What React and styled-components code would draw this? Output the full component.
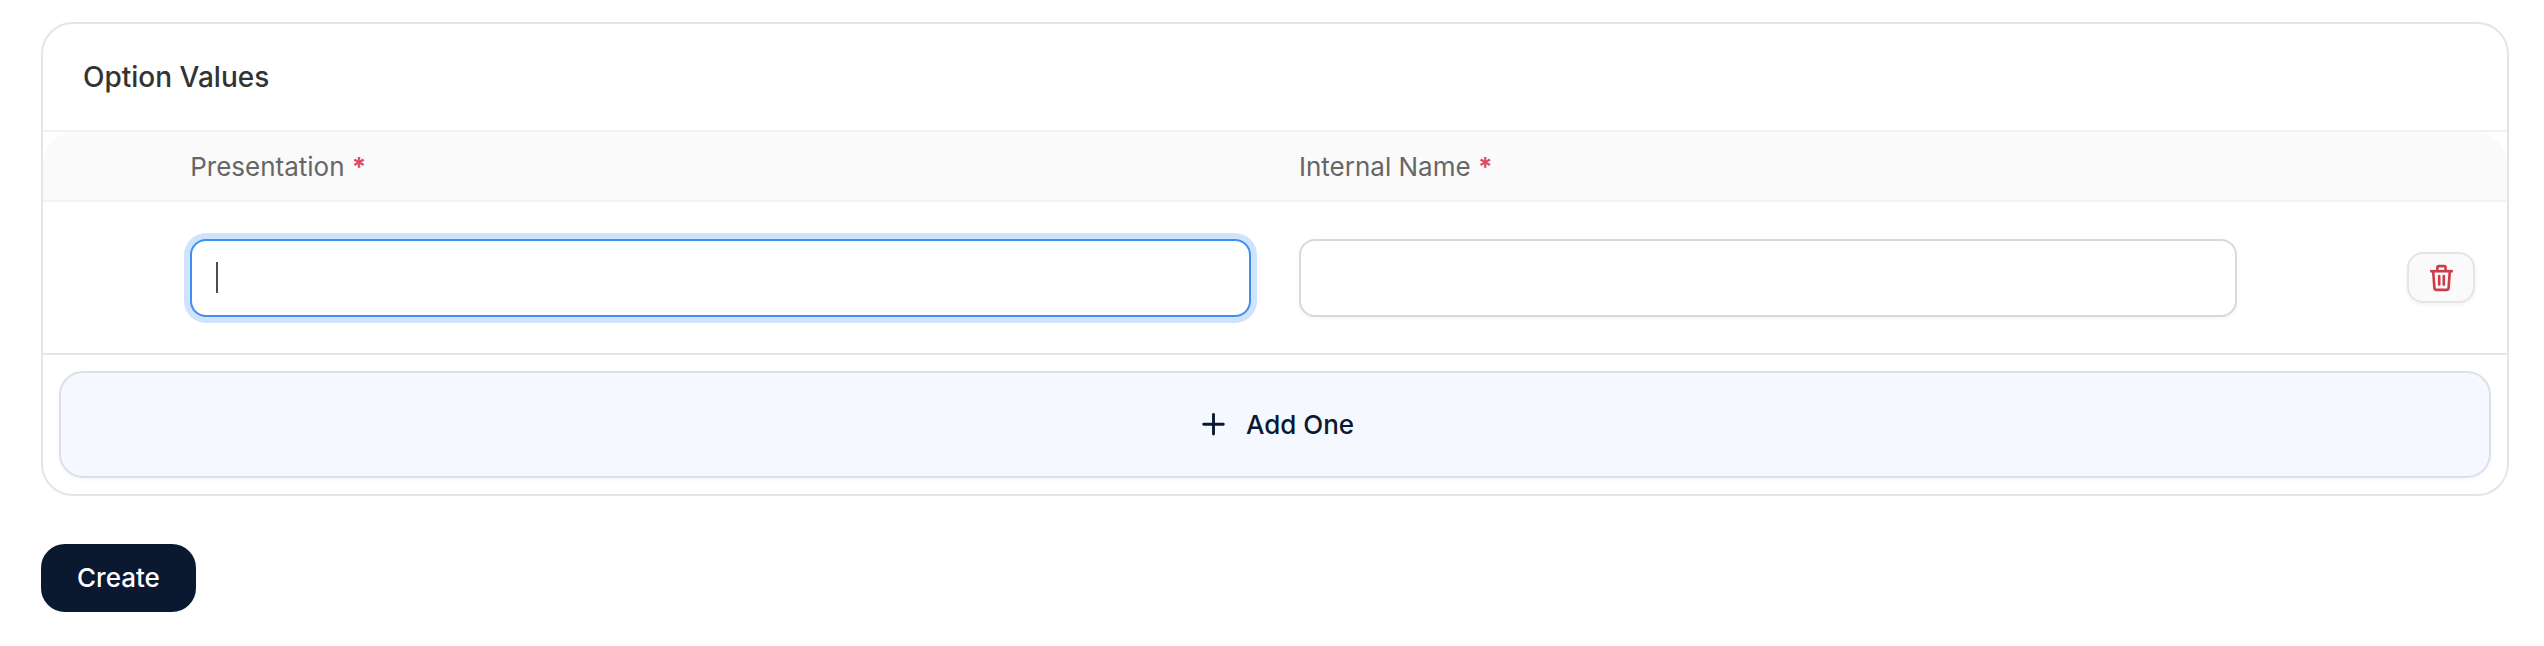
import React, { useState } from "react";
import styled, { createGlobalStyle } from "styled-components";

const GlobalStyle = createGlobalStyle`
  * {
    box-sizing: border-box;
  }

  body {
    margin: 0;
    background: #fff;
    color: #333;
    font-family: Inter, "Liberation Sans", sans-serif;
    font-size: 26px;
    line-height: 36px;
  }

  button,
  input {
    font: inherit;
  }
`;

const Form = styled.form`
  padding: 22px 35px 32px 41px;
`;

const Card = styled.section`
  margin-bottom: 48px;
  border: 2px solid #e5e5e5;
  border-radius: 32px;
`;

const CardHeader = styled.header`
  padding: 35px 40px;
  border-bottom: 2px solid #f2f2f2;
`;

const CardTitle = styled.h2`
  margin: 0;
  font-size: 28px;
  font-weight: 500;
`;

const Table = styled.table`
  width: 100%;
  table-layout: fixed;
  border-collapse: separate;
  border-spacing: 0;
`;

const HeadCell = styled.th`
  width: ${(props) => props.$width};
  padding: 17px 24px 15px;
  background: #fafafa;
  border-bottom: 2px solid #f2f2f2;
  color: #666;
  font-weight: 400;
  text-align: left;

  &:first-child {
    border-top-left-radius: 32px;
  }

  &:last-child {
    border-top-right-radius: 32px;
  }
`;

const Required = styled.span`
  color: #dd4a68;
  font-weight: 700;
`;

const Cell = styled.td`
  height: 153px;
  padding: 0 24px;
  border-bottom: 2px solid #e5e5e5;
`;

const ActionCell = styled(Cell)`
  padding-right: 32px;
  text-align: right;
`;

const Field = styled.div`
  position: relative;
  display: flex;
`;

const TextInput = styled.input`
  width: 100%;
  height: 78px;
  padding: 0 24px;
  background: #fff;
  border: 2px solid #d9d9d9;
  border-radius: 16px;
  box-shadow: 0 2px 4px rgba(0, 0, 0, 0.04);
  color: #333;
  caret-color: ${(props) => (props.value ? "#4d4d4d" : "transparent")};
  outline: none;

  &:focus {
    border-color: #3d8ff5;
    box-shadow: 0 0 0 6px #cfe3fd;
  }
`;

const Caret = styled.span`
  position: absolute;
  top: 23px;
  left: 26px;
  width: 2px;
  height: 31px;
  background: #4d4d4d;
  pointer-events: none;
`;

const Button = styled.button`
  display: inline-flex;
  align-items: center;
  justify-content: center;
  gap: 18px;
  border: 2px solid transparent;
  border-radius: 24px;
  font-weight: 500;
  cursor: pointer;
`;

const DeleteButton = styled(Button)`
  width: 68px;
  height: 51px;
  padding: 0;
  background: #fafafa;
  border-color: #e5e5e5;
  border-radius: 16px;
  box-shadow: 0 2px 4px rgba(0, 0, 0, 0.05);
  color: #cc3d47;
  vertical-align: middle;
`;

const CardFooter = styled.footer`
  padding: 16px;
`;

const AddButton = styled(Button)`
  width: 100%;
  height: 107px;
  background: #f5f8ff;
  border-color: #dbe0ea;
  box-shadow: 0 2px 4px rgba(0, 0, 0, 0.03);
  color: #0a1930;
`;

const SubmitButton = styled(Button)`
  height: 68px;
  padding: 0 34px;
  background: #0a1930;
  border-color: #0a1930;
  color: #fff;
`;

const Icon = styled.svg`
  width: 32px;
  height: 32px;
  fill: none;
  stroke: currentColor;
  stroke-width: ${(props) => props.$stroke};
  stroke-linecap: round;
  stroke-linejoin: round;
`;

function PlusIcon() {
  return (
    <Icon viewBox="0 0 32 32" $stroke={2.9} aria-hidden="true">
      <path d="M17.5 5.5v19.6M7.7 15.3h19.6" />
    </Icon>
  );
}

function TrashIcon() {
  return (
    <Icon viewBox="0 0 32 32" $stroke={2.6} aria-hidden="true">
      <path d="M6.4 9.2h20.2" strokeLinecap="square" />
      <path d="M12.4 9v-3.4a1.5 1.5 0 0 1 1.5 -1.5h5.2a1.5 1.5 0 0 1 1.5 1.5v3.4" />
      <path d="M8.2 9.4l1.2 16.4a2.3 2.3 0 0 0 2.3 2.1h9.6a2.3 2.3 0 0 0 2.3 -2.1l1.2 -16.4" />
      <path d="M14.2 14v8.6M18.8 14v8.6" />
    </Icon>
  );
}

function App() {
  const [values, setValues] = useState([{ id: 1, presentation: "", name: "" }]);
  const [focused, setFocused] = useState(1);

  const handleChange = (id, key, value) => {
    setValues(
      values.map((item) => (item.id === id ? { ...item, [key]: value } : item))
    );
  };

  const handleAdd = () => {
    setValues([...values, { id: Date.now(), presentation: "", name: "" }]);
  };

  const handleDelete = (id) => {
    setValues(values.filter((item) => item.id !== id));
  };

  return (
    <>
      <GlobalStyle />
      <Form onSubmit={(event) => event.preventDefault()}>
        <Card>
          <CardHeader>
            <CardTitle>Option Values</CardTitle>
          </CardHeader>
          <Table>
            <thead>
              <tr>
                <HeadCell $width="5%" />
                <HeadCell $width="45%" id="presentation">
                  Presentation <Required>*</Required>
                </HeadCell>
                <HeadCell $width="40%" id="internal-name">
                  Internal Name <Required>*</Required>
                </HeadCell>
                <HeadCell $width="10%" />
              </tr>
            </thead>
            <tbody>
              {values.map((item) => (
                <tr key={item.id}>
                  <Cell />
                  <Cell>
                    <Field>
                      <TextInput
                        type="text"
                        aria-labelledby="presentation"
                        autoFocus
                        value={item.presentation}
                        onFocus={() => setFocused(item.id)}
                        onBlur={() => setFocused(null)}
                        onChange={(event) =>
                          handleChange(item.id, "presentation", event.target.value)
                        }
                      />
                      {focused === item.id && !item.presentation && <Caret />}
                    </Field>
                  </Cell>
                  <Cell>
                    <Field>
                      <TextInput
                        type="text"
                        aria-labelledby="internal-name"
                        value={item.name}
                        onChange={(event) =>
                          handleChange(item.id, "name", event.target.value)
                        }
                      />
                    </Field>
                  </Cell>
                  <ActionCell>
                    <DeleteButton
                      type="button"
                      aria-label="Delete"
                      onClick={() => handleDelete(item.id)}
                    >
                      <TrashIcon />
                    </DeleteButton>
                  </ActionCell>
                </tr>
              ))}
            </tbody>
          </Table>
          <CardFooter>
            <AddButton type="button" onClick={handleAdd}>
              <PlusIcon />
              Add One
            </AddButton>
          </CardFooter>
        </Card>
        <SubmitButton type="submit">Create</SubmitButton>
      </Form>
    </>
  );
}

export default App;
